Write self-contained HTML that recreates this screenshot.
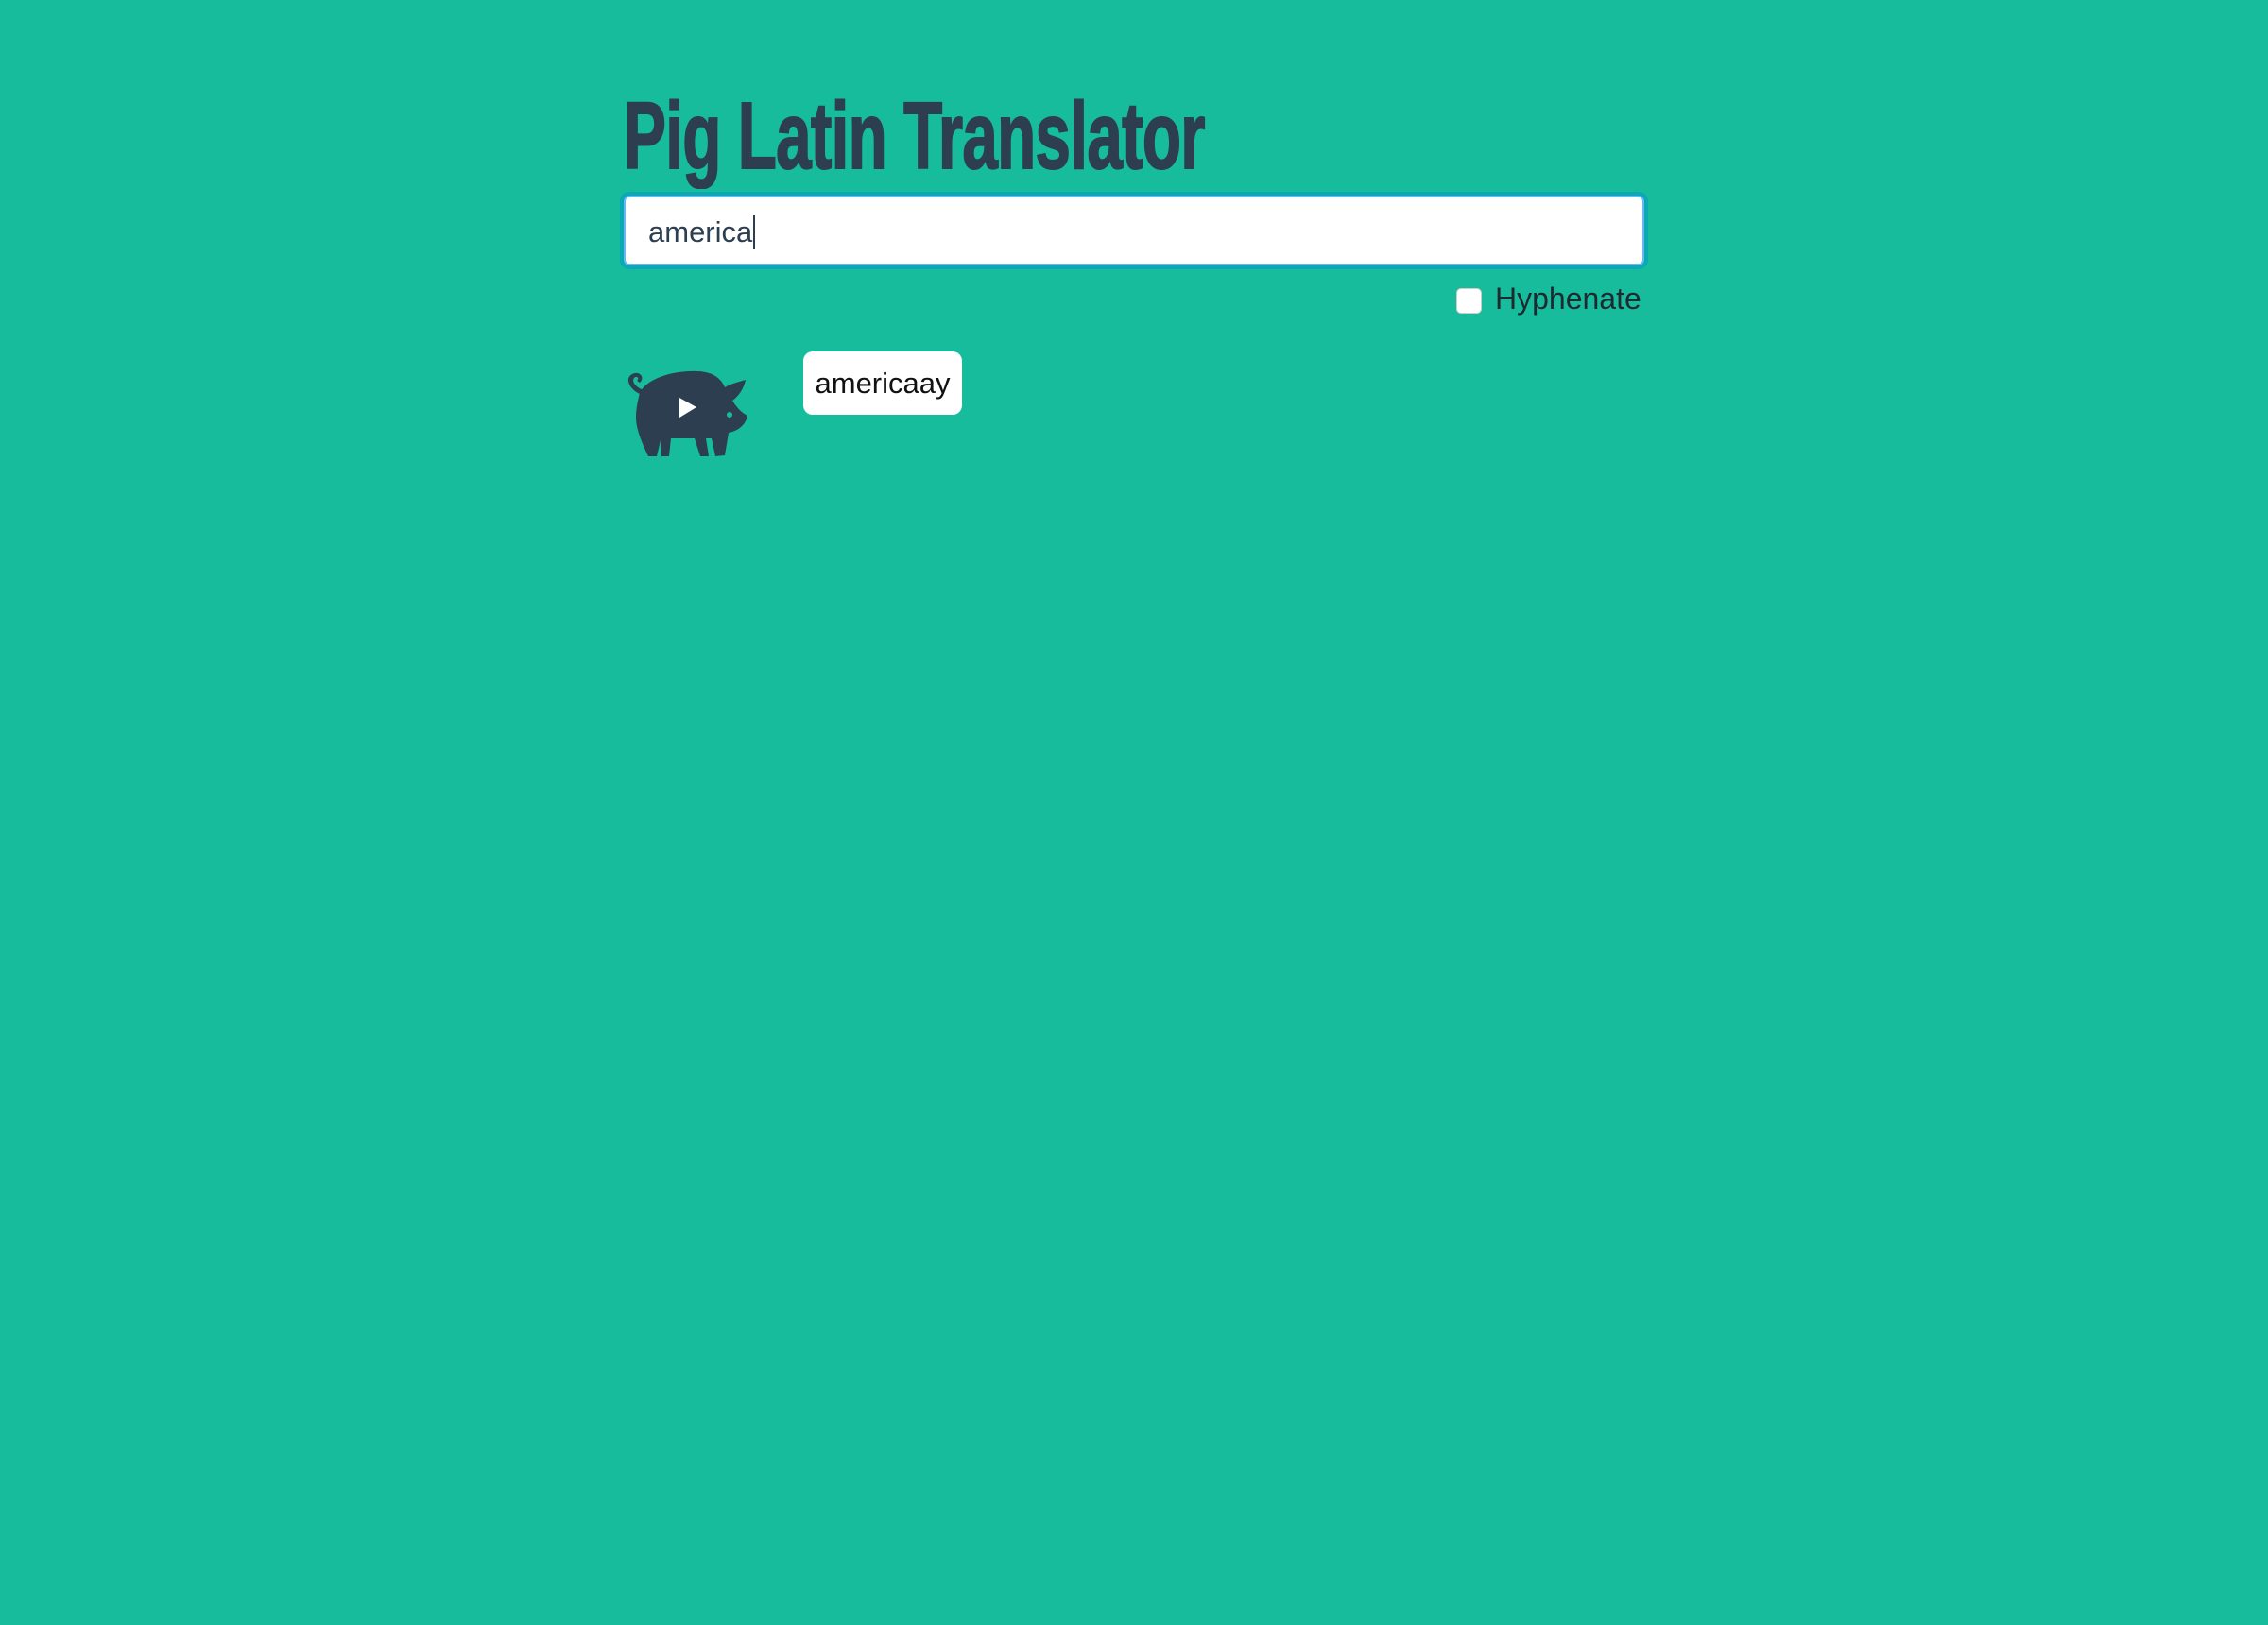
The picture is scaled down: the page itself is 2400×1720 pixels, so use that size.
<!DOCTYPE html>
<html><head><style>
html,body{margin:0;padding:0;background:#17bc9c;width:2400px;height:1720px;overflow:hidden;font-family:"Liberation Sans",sans-serif;}
h1{position:absolute;left:660px;top:86px;margin:0;font-size:100px;line-height:116px;color:#2c3e50;font-weight:bold;font-family:"Liberation Sans Narrow","Liberation Sans",sans-serif;transform:scaleX(0.673);transform-origin:left top;letter-spacing:-1px;white-space:nowrap;-webkit-text-stroke:2px #2c3e50;}
.inp{position:absolute;left:660px;top:207px;width:1076px;height:70px;background:#fff;border:2px solid #6ab8f0;border-radius:6px;box-shadow:0 0 0 4px #0ba8b6;}
.inp span{position:absolute;left:24px;top:19px;font-size:31px;color:#2c3e50;}
.inp span:after{content:"";display:inline-block;width:2px;height:36px;background:#2c3e50;vertical-align:-8px;margin-left:1px;}
.cb{position:absolute;left:1541px;top:305px;width:27px;height:27px;background:#fff;border-radius:5px;border:1px solid #ccc;box-sizing:border-box;}
.lbl{position:absolute;left:1582px;top:298px;font-size:32px;color:#1f2a30;}
.btn{position:absolute;left:850px;top:372px;width:168px;height:67px;background:#fff;border-radius:10px;font-size:31px;color:#111;text-align:center;line-height:67px;}
svg{position:absolute;left:655px;top:380px;}
</style></head><body>
<h1>Pig Latin Translator</h1>
<div class="inp"><span>america</span></div>
<div class="cb"></div>
<div class="lbl">Hyphenate</div>
<svg width="150" height="110" viewBox="0 0 150 110">
<path fill="#2c3e50" d="M24 38 C10 32 6 20 14 16 C22 12 28 20 22 25 L19 23 C22 21 19 17 16 20 C13 24 18 30 26 33 Z"/>
<path fill="#2c3e50" d="M22 36 C28 22 55 12 82 13 C98 13 108 20 112 30 C118 26 128 24 134 22 C132 32 126 40 120 44 C124 50 128 56 136 60 C134 70 126 76 116 78 L112 102 L102 103 L98 84 L92 84 L95 103 L86 103 L80 84 L55 84 L53 103 L45 103 L44 86 L40 103 L31 103 C24 88 18 74 18 62 C18 52 20 44 22 36 Z"/>
<circle cx="117" cy="59" r="3" fill="#17bc9c"/>
<path fill="#fff" d="M64 41 L82 51 L64 62 Z"/>
</svg>
<div class="btn">americaay</div>
</body></html>
